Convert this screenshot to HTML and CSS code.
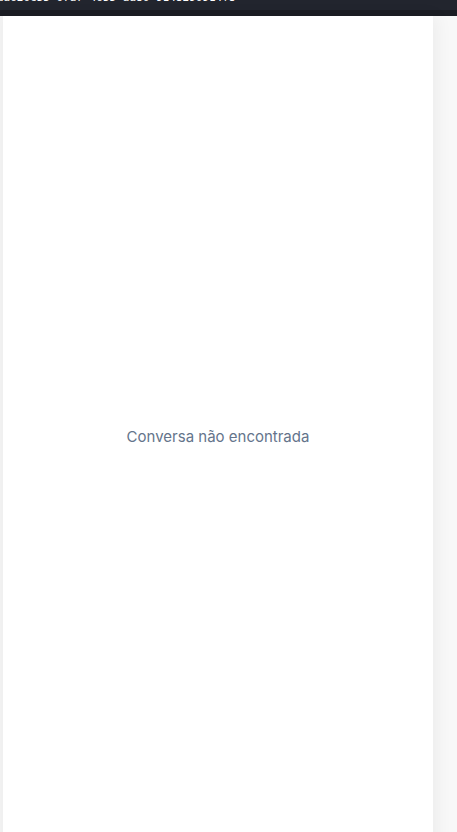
FILE: index.html
```html
<!DOCTYPE html>
<html lang="pt">
<head>
<meta charset="utf-8">
<title>Conversa</title>
<link rel="stylesheet" href="styles.css">
</head>
<body>
  <div class="topbar">
    <div class="url-strip"><span class="url">da620c55-07a7-4655-aa80-9148290914f8</span></div>
    <div class="bar-edge"></div>
  </div>
  <div class="stage">
    <main class="panel">
      <p class="empty">Conversa não encontrada</p>
    </main>
  </div>
</body>
</html>
```

FILE: styles.css
```css
html, body {
  margin: 0;
  padding: 0;
  height: 100%;
  overflow: hidden;
  background: #f8f8f8;
  font-family: Inter, "Noto Sans", Roboto, sans-serif;
}

.topbar {
  display: flex;
  flex-direction: column;
}

.url-strip {
  height: 10px;
  overflow: hidden;
  background: #22252e;
  display: flex;
  align-items: flex-end;
}

.url {
  font-family: "DejaVu Sans Mono", "Liberation Mono", monospace;
  font-size: 11px;
  line-height: 14px;
  color: #ffffff;
  white-space: nowrap;
  margin-left: -3px;
  margin-bottom: 5px;
}

.bar-edge {
  height: 6px;
  background: #1b1d23;
}

.stage {
  display: flex;
  padding-left: 3px;
  background: linear-gradient(90deg, #f3f3f3 0, #f3f3f3 3px, transparent 3px);
}

.panel {
  width: 430px;
  height: 840px;
  background: #ffffff;
  box-shadow: 4px 0 16px rgba(0, 0, 0, 0.05);
  display: flex;
  align-items: center;
  justify-content: center;
}

.empty {
  margin: 0;
  font-size: 15px;
  color: #64748b;
}
```
